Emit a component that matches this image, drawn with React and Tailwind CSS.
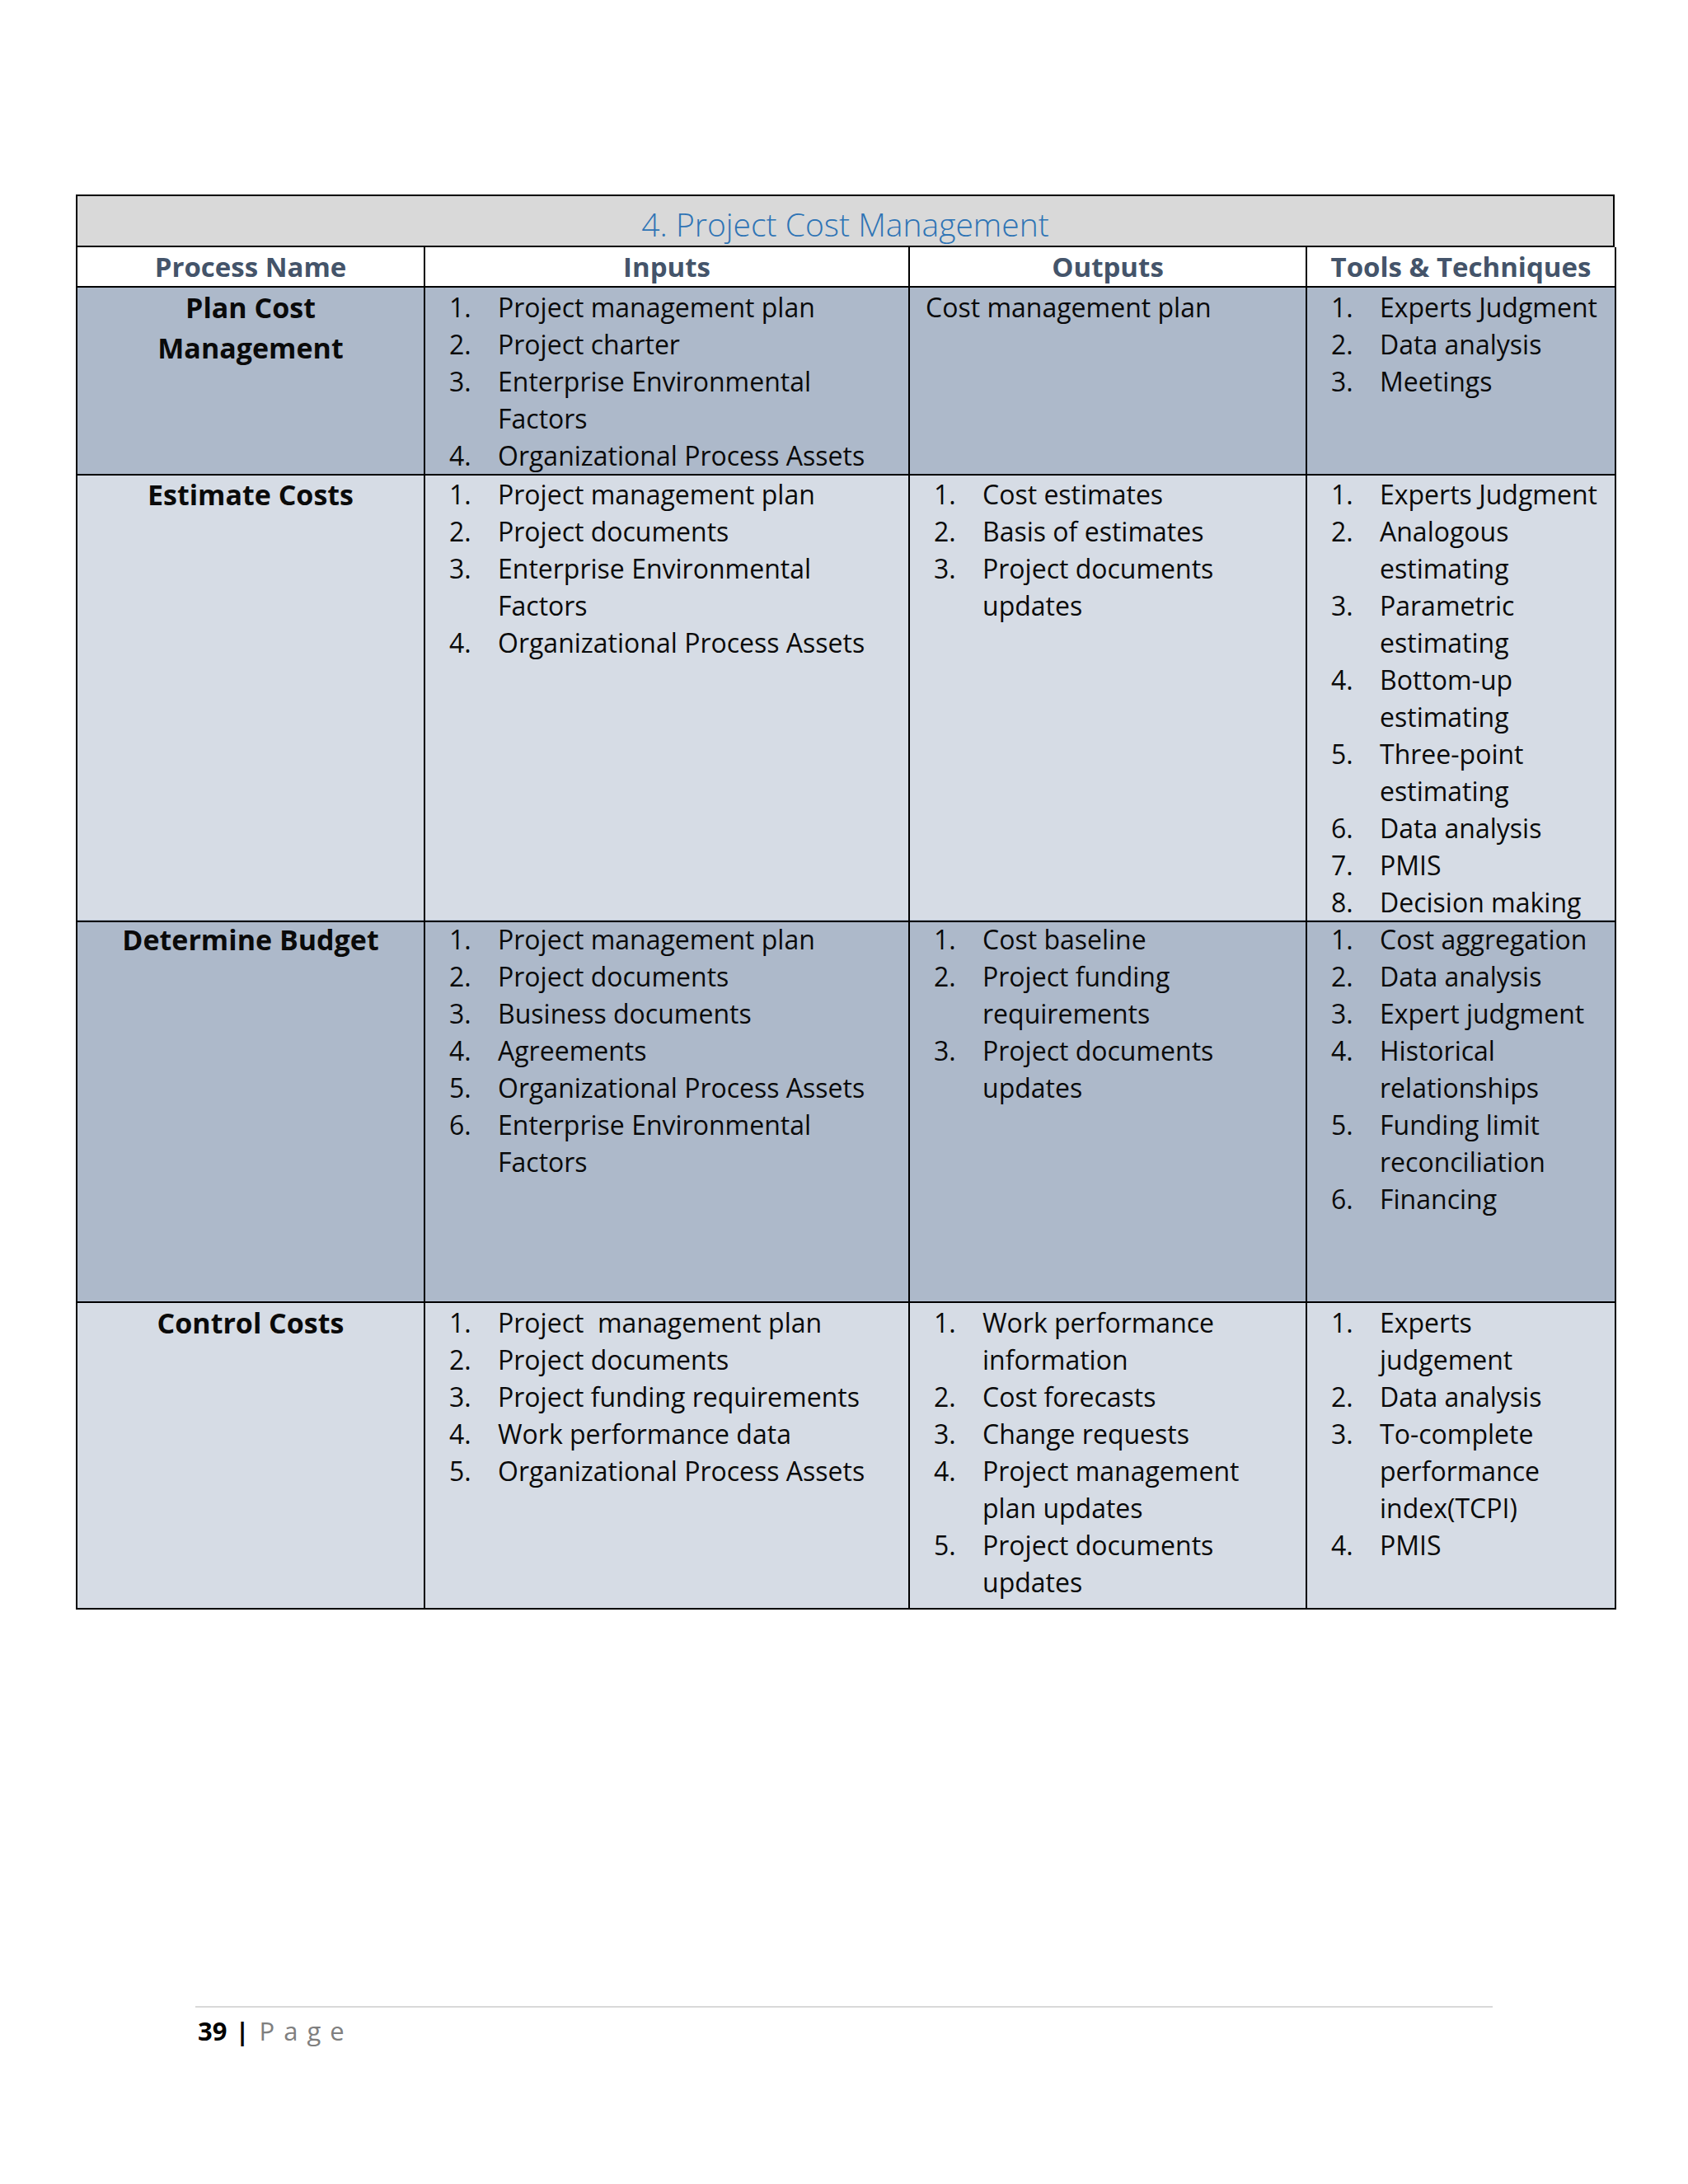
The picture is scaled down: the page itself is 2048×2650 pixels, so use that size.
import React from "react";

const rows = [
  {
    name: ["Plan Cost", "Management"],
    bg: "bg-[#adb9ca]",
    h: "h-[227px]",
    inputs: { numbered: true, items: [["Project management plan"], ["Project charter"], ["Enterprise Environmental", "Factors"], ["Organizational Process Assets"]] },
    outputs: { numbered: false, items: [["Cost management plan"]] },
    tools: { numbered: true, items: [["Experts Judgment"], ["Data analysis"], ["Meetings"]] },
  },
  {
    name: ["Estimate Costs"],
    bg: "bg-[#d6dce5]",
    h: "h-[540px]",
    inputs: { numbered: true, items: [["Project management plan"], ["Project documents"], ["Enterprise Environmental", "Factors"], ["Organizational Process Assets"]] },
    outputs: { numbered: true, items: [["Cost estimates"], ["Basis of estimates"], ["Project documents", "updates"]] },
    tools: {
      numbered: true,
      items: [["Experts Judgment"], ["Analogous", "estimating"], ["Parametric", "estimating"], ["Bottom-up", "estimating"], ["Three-point", "estimating"], ["Data analysis"], ["PMIS"], ["Decision making"]],
    },
  },
  {
    name: ["Determine Budget"],
    bg: "bg-[#adb9ca]",
    h: "h-[465px]",
    inputs: {
      numbered: true,
      items: [["Project management plan"], ["Project documents"], ["Business documents"], ["Agreements"], ["Organizational Process Assets"], ["Enterprise Environmental", "Factors"]],
    },
    outputs: { numbered: true, items: [["Cost baseline"], ["Project funding", "requirements"], ["Project documents", "updates"]] },
    tools: {
      numbered: true,
      items: [["Cost aggregation"], ["Data analysis"], ["Expert judgment"], ["Historical", "relationships"], ["Funding limit", "reconciliation"], ["Financing"]],
    },
  },
  {
    name: ["Control Costs"],
    bg: "bg-[#d6dce5]",
    h: "h-[372px]",
    inputs: {
      numbered: true,
      items: [["Project\u00a0 management plan"], ["Project documents"], ["Project funding requirements"], ["Work performance data"], ["Organizational Process Assets"]],
    },
    outputs: {
      numbered: true,
      items: [["Work performance", "information"], ["Cost forecasts"], ["Change requests"], ["Project management", "plan updates"], ["Project documents", "updates"]],
    },
    tools: {
      numbered: true,
      items: [["Experts", "judgement"], ["Data analysis"], ["To-complete", "performance", "index(TCPI)"], ["PMIS"]],
    },
  },
];

function List({ data }) {
  if (!data.numbered) {
    return (
      <div className="pl-[19px] pt-[1px]">
        {data.items.map((it, i) => (
          <div key={i} className="whitespace-nowrap leading-[45px]">
            {it.join(" ")}
          </div>
        ))}
      </div>
    );
  }
  return (
    <div className="pt-[1px]">
      {data.items.map((it, i) => (
        <div key={i} className="flex">
          <div className="w-[88px] shrink-0 pl-[29px] leading-[45px]">{i + 1}.</div>
          <div>
            {it.map((l, j) => (
              <div key={j} className="whitespace-nowrap leading-[45px]">
                {l}
              </div>
            ))}
          </div>
        </div>
      ))}
    </div>
  );
}

export default function App() {
  const font = { fontFamily: '"Open Sans", "Noto Sans", sans-serif' };
  return (
    <div className="relative w-[2048px] h-[2650px] bg-white text-black" style={font}>
      <div className="pt-[236px] pl-[92px]">
        <div className="w-[1867px] border-l-2 border-t-2 border-black">
          <div className="h-[62px] bg-[#d9d9d9] border-r-2 border-b-2 border-black flex items-center justify-center pt-[8px] text-[39px] font-light text-[#2e74b5]">
            4. Project Cost Management
          </div>
          <div className="grid grid-cols-[422px_588px_482px_375px] h-[49px] bg-white text-[#44546a] font-bold text-[33px]">
            {["Process Name", "Inputs", "Outputs", "Tools & Techniques"].map((t) => (
              <div key={t} className="border-r-2 border-b-2 border-black flex items-center justify-center leading-none">
                {t}
              </div>
            ))}
          </div>
          {rows.map((r, i) => (
            <div key={i} className={`grid grid-cols-[422px_588px_482px_375px] ${r.h} ${r.bg} text-[32px] text-[#0a0a0a]`}>
              <div className="border-r-2 border-b-2 border-black text-center font-bold text-[34px]">
                {r.name.map((n, j) => (
                  <div key={j} className="leading-[49px]">
                    {n}
                  </div>
                ))}
              </div>
              <div className="border-r-2 border-b-2 border-black">
                <List data={r.inputs} />
              </div>
              <div className="border-r-2 border-b-2 border-black">
                <List data={r.outputs} />
              </div>
              <div className="border-r-2 border-b-2 border-black">
                <List data={r.tools} />
              </div>
            </div>
          ))}
        </div>
      </div>
      <div className="absolute left-[237px] top-[2434px] w-[1574px] h-[2px] bg-[#d9d9d9]" />
      <div className="absolute left-[240px] top-[2444px] flex items-center text-[31px] leading-[40px]">
        <span className="font-bold">39</span>
        <span className="font-bold ml-[10px]">|</span>
        <span className="ml-[12px] text-[#7f7f7f] tracking-[11px]">Page</span>
      </div>
    </div>
  );
}
